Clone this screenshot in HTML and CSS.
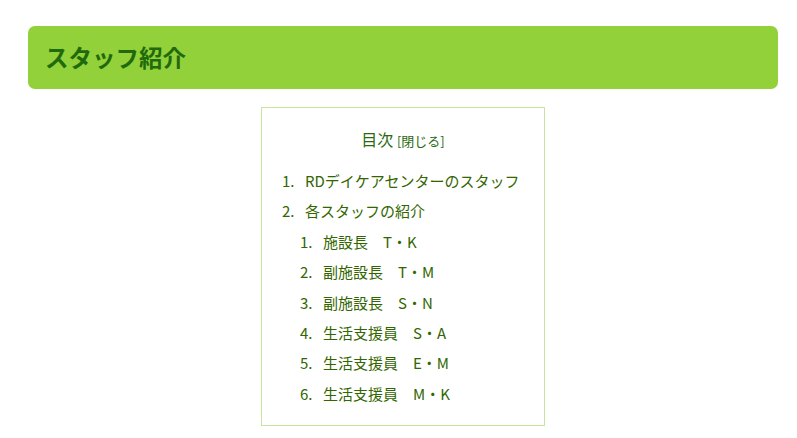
FILE: index.html
```html
<!DOCTYPE html>
<html lang="ja">
<head>
  <meta charset="UTF-8">
  <title>スタッフ紹介</title>
  <link rel="stylesheet" href="styles.css">
</head>
<body>
  <div class="content">
    <!-- 見出し -->
    <h2 class="page-title">スタッフ紹介</h2>

    <!-- 目次 -->
    <div class="toc">
      <p class="toc-title">目次 <span class="toc-toggle">[<a href="#">閉じる</a>]</span></p>
      <ol class="toc-list">
        <li><span class="num">1.</span>RDデイケアセンターのスタッフ</li>
        <li><span class="num">2.</span>各スタッフの紹介
          <ol class="toc-list sub">
            <li><span class="num">1.</span>施設長　T・K</li>
            <li><span class="num">2.</span>副施設長　T・M</li>
            <li><span class="num">3.</span>副施設長　S・N</li>
            <li><span class="num">4.</span>生活支援員　S・A</li>
            <li><span class="num">5.</span>生活支援員　E・M</li>
            <li><span class="num">6.</span>生活支援員　M・K</li>
          </ol>
        </li>
      </ol>
    </div>
  </div>
</body>
</html>
```

FILE: styles.css
```css
/* 全体 */
body {
  margin: 0;
  padding: 0;
  background: #fff;
  font-family: "Noto Sans CJK JP", "DejaVu Sans", sans-serif;
  color: #336600;
}

.content {
  width: 750px;
  margin-left: 28px;
  padding-top: 26px;
}

/* 見出し */
.page-title {
  margin: 0;
  height: 63px;
  line-height: 63px;
  padding: 0 17px;
  background: #93d13b;
  border-radius: 7px;
  color: #1f6a0c;
  font-size: 23.5px;
  font-weight: bold;
}

/* 目次 */
.toc {
  box-sizing: border-box;
  width: 284px;
  margin: 18px auto 0;
  padding: 18px 20px 16px;
  border: 1px solid #c6e6a0;
  white-space: nowrap;
}

.toc-title {
  margin: 0 0 12px;
  text-align: center;
  font-size: 16px;
  line-height: 26px;
  color: #2b6a10;
}

.toc-toggle {
  font-size: 13px;
}

.toc-toggle a {
  color: #2b6a10;
  text-decoration: none;
}

.toc-list {
  list-style: none;
  margin: 0;
  padding: 0;
  font-size: 15px;
}

.toc-list li {
  line-height: 30.4px;
}

.toc-list.sub {
  padding-left: 18px;
}

.num {
  display: inline-block;
  width: 23px;
}
```
